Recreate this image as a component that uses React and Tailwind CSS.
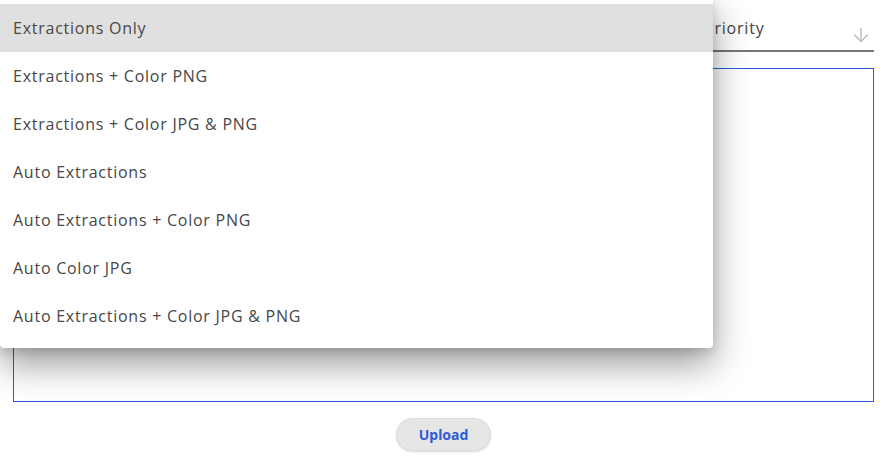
import React from "react";
import { ArrowDown } from "lucide-react";

const items = [
  "Extractions Only",
  "Extractions + Color PNG",
  "Extractions + Color JPG & PNG",
  "Auto Extractions",
  "Auto Extractions + Color PNG",
  "Auto Color JPG",
  "Auto Extractions + Color JPG & PNG",
];

export default function App() {
  return (
    <div className="relative w-[885px] h-[469px] overflow-hidden bg-white">
      <div className="flex flex-col pl-[13px] pr-[11px] pt-[4px]" style={{ fontFamily: '"Open Sans", sans-serif' }}>
        <div className="grid grid-cols-[1fr_175px] gap-[16px] h-[48px]">
          <div className="border-b-2 border-[#777]"></div>
          <div className="flex items-center justify-between border-b-2 border-[#777] pl-[5px] pr-[2px]">
            <span className="text-[16px] font-normal text-[#444] tracking-[0.8px] mt-[2px]">Priority</span>
            <ArrowDown className="w-[22px] h-[22px] text-[#bdbdbd] mt-[15px]" strokeWidth={1.6} />
          </div>
        </div>
        <div className="mt-[16px] h-[334px] border border-[#2f5bd8]"></div>
        <div className="flex justify-center mt-[16px]">
          <button
            className="w-[95px] h-[33px] rounded-full bg-[#e6e6e6] border border-[#dcdcdc] text-[#2f5bd8] text-[14px] font-bold shadow-[0_1px_2px_rgba(0,0,0,0.15)]"
            style={{ fontFamily: '"Noto Sans", sans-serif' }}
          >
            Upload
          </button>
        </div>
      </div>

      <div
        className="absolute left-0 top-[-4px] w-[713px] bg-white rounded-[4px] py-[8px] shadow-[0_16px_36px_rgba(0,0,0,0.4),0_4px_10px_rgba(0,0,0,0.12)]"
        style={{ fontFamily: '"Open Sans", sans-serif' }}
      >
        {items.map((t, i) => (
          <div
            key={t}
            className={`h-[48px] flex items-center px-[13px] text-[16px] font-normal text-[#474747] tracking-[0.75px] ${i === 0 ? "bg-[#e0e0e0]" : ""}`}
          >
            {t}
          </div>
        ))}
      </div>
    </div>
  );
}
